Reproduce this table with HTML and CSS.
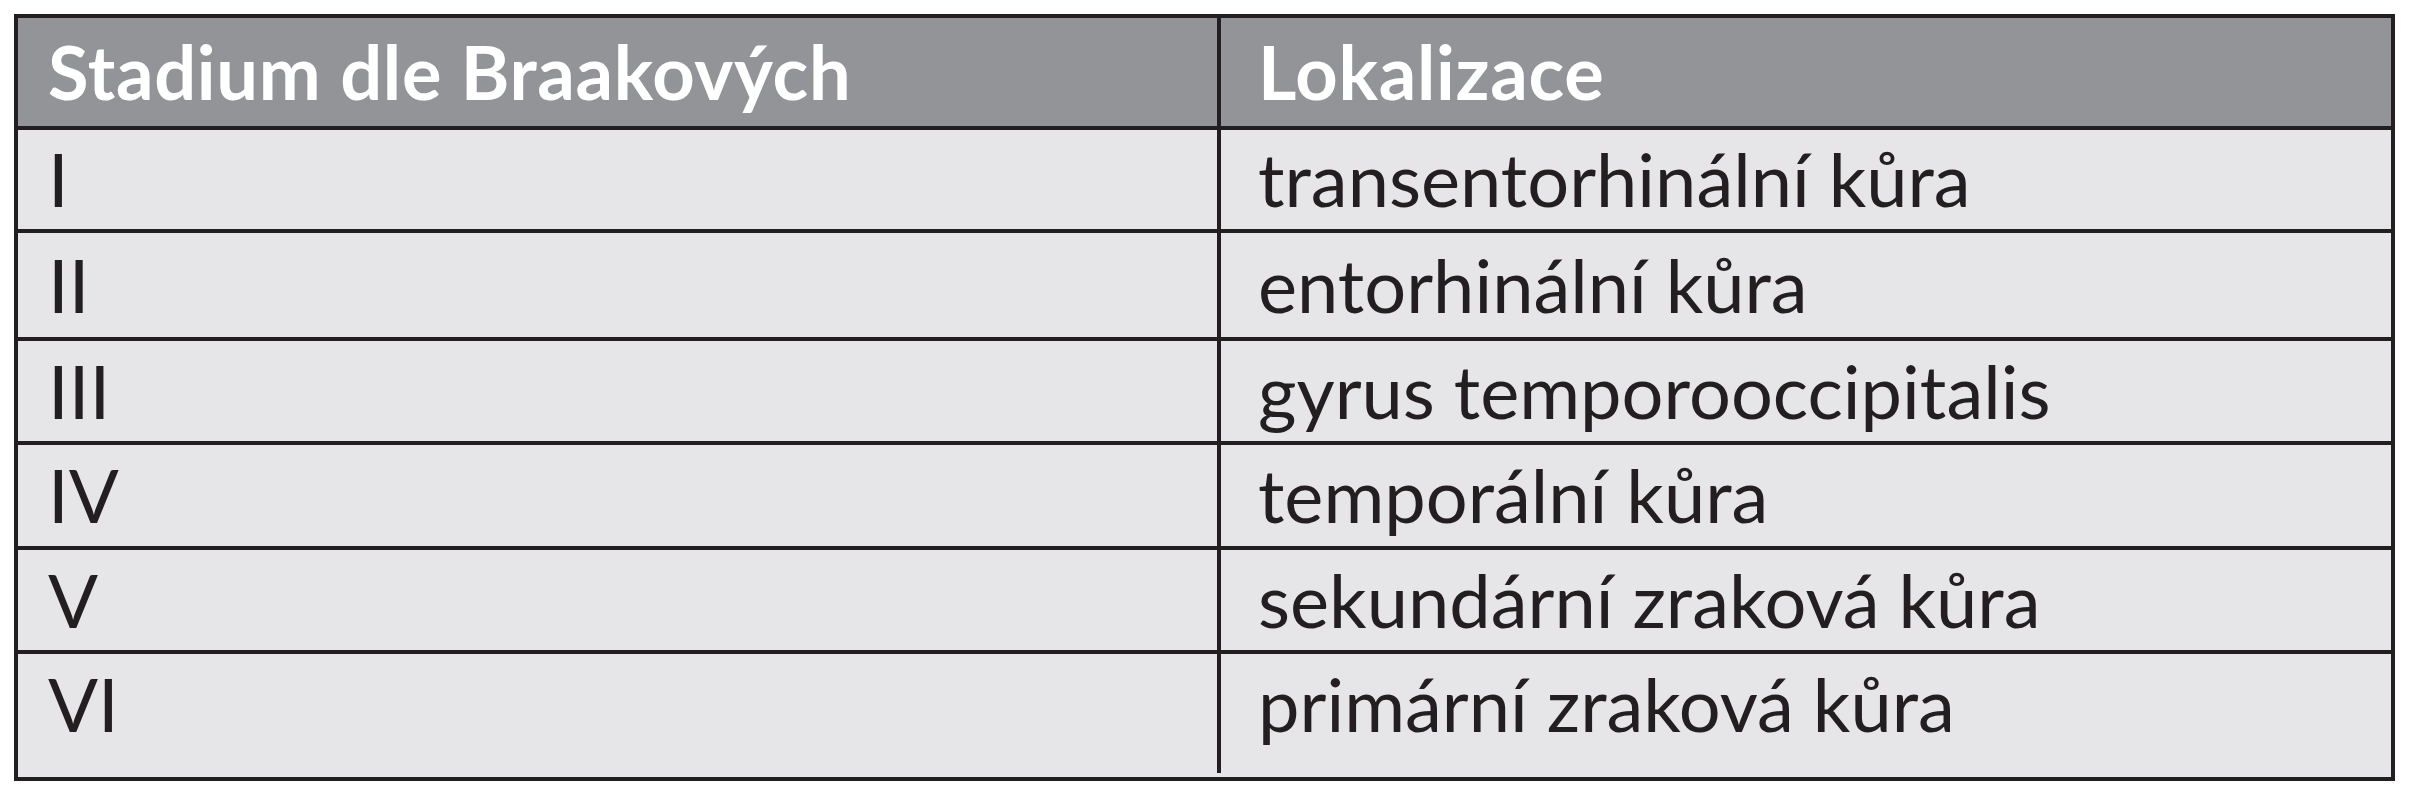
FILE: index.html
```html
<!DOCTYPE html>
<html lang="cs">
<head>
<meta charset="utf-8">
<title>Stadia dle Braakových</title>
<link rel="stylesheet" href="styles.css">
</head>
<body>
<div class="table">
  <div class="row head">
    <div class="cell c1">Stadium dle Braakových</div>
    <div class="cell c2">Lokalizace</div>
  </div>
  <div class="row first">
    <div class="cell c1">I</div>
    <div class="cell c2">transentorhinální kůra</div>
  </div>
  <div class="row tall">
    <div class="cell c1">II</div>
    <div class="cell c2">entorhinální kůra</div>
  </div>
  <div class="row">
    <div class="cell c1">III</div>
    <div class="cell c2">gyrus temporooccipitalis</div>
  </div>
  <div class="row mid">
    <div class="cell c1">IV</div>
    <div class="cell c2">temporální kůra</div>
  </div>
  <div class="row">
    <div class="cell c1">V</div>
    <div class="cell c2">sekundární zraková kůra</div>
  </div>
  <div class="row last">
    <div class="cell c1">VI</div>
    <div class="cell c2">primární zraková kůra</div>
  </div>
</div>
</body>
</html>
```
FILE: styles.css
```css
html, body {
  margin: 0;
  padding: 0;
  background: #ffffff;
}

body {
  font-family: Lato, "Noto Sans", "DejaVu Sans", sans-serif;
  color: #231f20;
}

.table {
  box-sizing: border-box;
  width: 2381px;
  margin: 14px 0 0 14px;
  border: 4px solid #231f20;
  background: #e6e6e8;
}

.row {
  display: flex;
  box-sizing: border-box;
  height: 104px;
  font-size: 74px;
  line-height: 1.2;
}

.row + .row {
  border-top: 4px solid #231f20;
}

.row.head {
  height: 108px;
  background: #939498;
  color: #ffffff;
  font-weight: 700;
  letter-spacing: 0.7px;
}

.row.first {
  height: 103px;
}

.row.tall {
  height: 108px;
}

.row.mid {
  height: 105px;
}

.row.last {
  height: 127px;
}

.cell {
  display: flex;
  box-sizing: border-box;
  align-items: center;
  white-space: nowrap;
}

.c1 {
  width: 1203px;
  flex: 0 0 1203px;
  padding-left: 30px;
  border-right: 4px solid #231f20;
}

.c2 {
  flex: 1 1 auto;
  padding-left: 37px;
}

.row.last .cell {
  padding-bottom: 23px;
}

.row.last .c1 {
  border-right: none;
  padding-right: 4px;
  background: linear-gradient(#231f20, #231f20) right top / 4px calc(100% - 4px) no-repeat;
}
```
